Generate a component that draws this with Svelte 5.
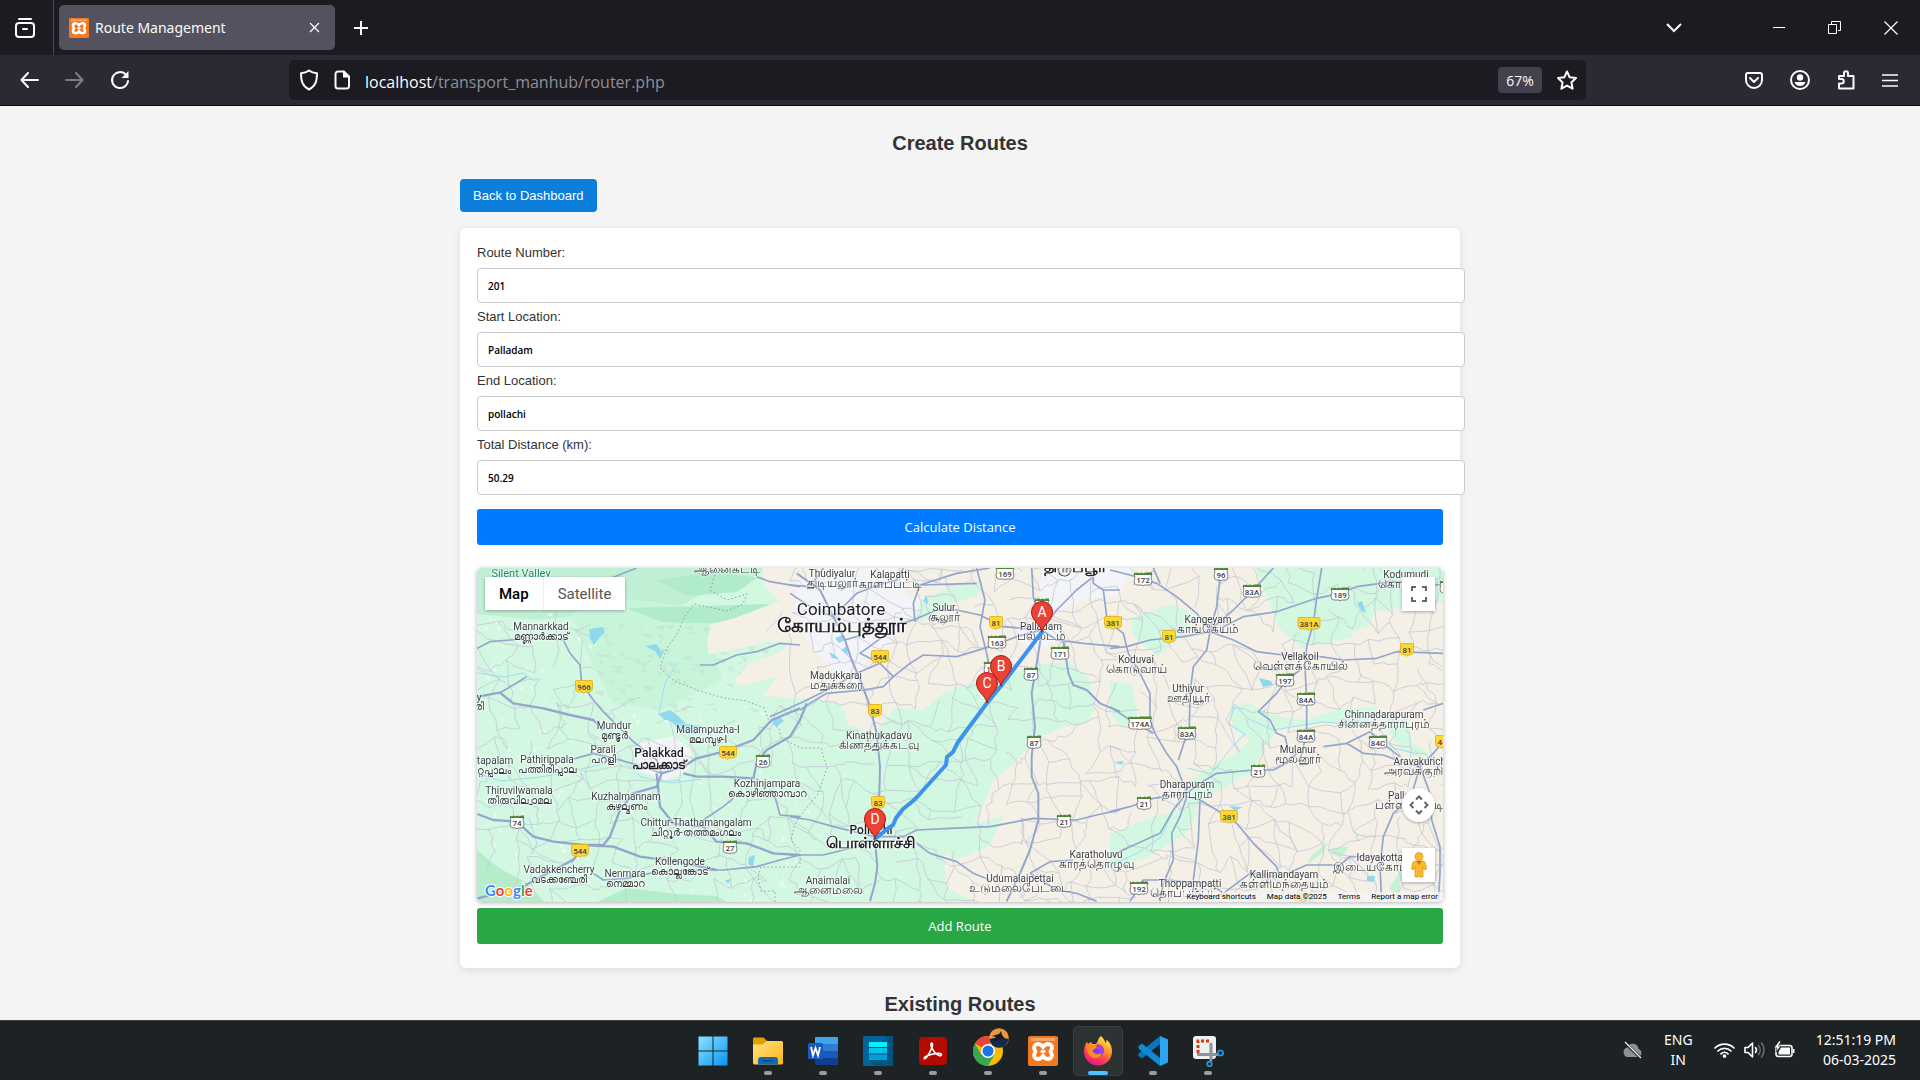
<script>
  let fields = $state([
    { id: 'route-number', label: 'Route Number:', value: '201' },
    { id: 'start-location', label: 'Start Location:', value: 'Palladam' },
    { id: 'end-location', label: 'End Location:', value: 'pollachi' },
    { id: 'total-distance', label: 'Total Distance (km):', value: '50.29' }
  ]);

  // Towns: x centre, baseline, name, local name
  const keralaTowns = [
    [64, 62, 'Mannarkkad', 'മണ്ണാർക്കാട്'],
    [137, 161, 'Mundur', 'മുണ്ടൂർ'],
    [126, 185, 'Parali', 'പറളി'],
    [231, 165, 'Malampuzha-I', 'മലമ്പുഴ-I'],
    [13, 196, 'Ottapalam', 'ഒറ്റപ്പാലം'],
    [70, 195, 'Pathirippala', 'പത്തിരിപ്പാല'],
    [42, 226, 'Thiruvilwamala', 'തിരുവില്വാമല'],
    [149, 232, 'Kuzhalmannam', 'കുഴല്മണം'],
    [219, 258, 'Chittur-Thathamangalam', 'ചിറ്റൂർ-തത്തമംഗലം'],
    [290, 219, 'Kozhinjampara', 'കൊഴിഞ്ഞാമ്പാറ'],
    [203, 297, 'Kollengode', 'കൊല്ലങ്കോട്'],
    [82, 305, 'Vadakkencherry', 'വടക്കഞ്ചേരി'],
    [148, 309, 'Nenmara', 'നെമ്മാറ']
  ];
  const tamilTowns = [
    [355, 9, 'Thudiyalur', 'துடியலூர்'],
    [413, 10, 'Kalapatti', 'காளப்பட்டி'],
    [467, 43, 'Sulur', 'சூலூர்'],
    [359, 111, 'Madukkarai', 'மதுக்கரை'],
    [402, 171, 'Kinathukadavu', 'கிணத்துக்கடவு'],
    [564, 62, 'Palladam', 'பல்லடம்'],
    [351, 316, 'Anaimalai', 'ஆனைமலை'],
    [543, 314, 'Udumalaipettai', 'உடுமலைபேட்டை'],
    [619, 290, 'Karatholuvu', 'காரத்தொழுவு'],
    [659, 95, 'Koduvai', 'கொடுவாய்'],
    [731, 55, 'Kangeyam', 'காங்கேயம்'],
    [711, 124, 'Uthiyur', 'ஊதியூர்'],
    [823, 92, 'Vellakoil', 'வெள்ளக்கோயில்'],
    [929, 10, 'Kodumudi', 'கொடுமுடி'],
    [907, 150, 'Chinnadarapuram', 'சின்னத்தாராபுரம்'],
    [821, 185, 'Mulanur', 'மூலனூர்'],
    [944, 197, 'Aravakurichi', 'அரவக்குறிச்சி'],
    [710, 220, 'Dharapuram', 'தாராபுரம்'],
    [932, 231, 'Pallapatti', 'பள்ளப்பட்டி'],
    [904, 293, 'Idayakottai', 'இடையகோட்டை'],
    [807, 310, 'Kallimandayam', 'கள்ளிமந்தையம்'],
    [713, 319, 'Thoppampatti', 'தொப்பம்பட்டி']
  ];

  const nationalRoads = [
    [107, 119, '966'], [251, 185, '544'], [103, 283, '544'], [403, 89, '544'], [398, 143, '83'],
    [401, 235, '83'], [519, 55, '81'], [636, 55, '381'], [692, 69, '81'], [832, 56, '381A'],
    [930, 82, '81'], [752, 249, '381'], [965, 174, '44'], [828, 332, '381']
  ];
  const stateRoads = [
    [286, 193, '26'], [40, 254, '74'], [253, 279, '27'], [528, 5, '169'], [520, 74, '163'],
    [583, 85, '171'], [554, 106, '87'], [557, 174, '87'], [516, 100, '163'], [587, 253, '21'],
    [565, 37, '19'], [666, 11, '172'], [744, 6, '96'], [775, 23, '83A'], [863, 26, '189'],
    [808, 112, '197'], [829, 131, '84A'], [829, 168, '84A'], [901, 174, '84C'], [663, 155, '174A'],
    [710, 165, '83A'], [781, 203, '21'], [667, 235, '21'], [662, 320, '192'], [970, 19, '37']
  ];
  const stops = [[565, 64, 'A'], [524, 118, 'B'], [510, 135, 'C'], [398, 271, 'D']];

  // Deterministic mesh of village roads and field patches
  let seed = 11;
  const rand = () => ((seed = (seed * 16807) % 2147483647) / 2147483647);
  const hilly = (x, y) =>
    (x > 118 && x < 300 && y < 142) || (x > 90 && x < 250 && y < 60) || (x < 80 && y < 45) ||
    (x < 250 && y > 322) || (x < 30 && y > 290);
  const cell = 20;
  const nodes = [];
  for (let r = 0; r < 19; r++) {
    nodes.push([]);
    for (let c = 0; c < 51; c++) {
      nodes[r].push([c * cell - 12 + rand() * 18, r * cell - 12 + rand() * 18]);
    }
  }
  const f = (n) => n.toFixed(1);
  const link = (a, b) => {
    let d = `M${f(a[0])} ${f(a[1])}`;
    for (const t of [0.33, 0.66]) {
      d += `L${f(a[0] + (b[0] - a[0]) * t + rand() * 5 - 2.5)} ${f(a[1] + (b[1] - a[1]) * t + rand() * 5 - 2.5)}`;
    }
    return `${d}L${f(b[0])} ${f(b[1])}`;
  };
  let lanes = '';
  for (let r = 0; r < 18; r++) {
    for (let c = 0; c < 50; c++) {
      const a = nodes[r][c];
      if (hilly(a[0], a[1])) continue;
      if (rand() < 0.68) lanes += link(a, nodes[r][c + 1]);
      if (rand() < 0.68) lanes += link(a, nodes[r + 1][c]);
      if (rand() < 0.18) lanes += link(a, nodes[r + 1][c + 1]);
    }
  }
  let flecks = '';
  for (let i = 0; i < 460; i++) {
    const x = rand() * 330;
    const y = rand() * 334;
    if (hilly(x, y)) continue;
    flecks += `M${f(x)} ${f(y)}l${f(rand() * 5)} ${f(rand() * 4 - 2)}l${f(-rand() * 3)} ${f(rand() * 5)}z`;
  }
  let ridges = '';
  for (let i = 0; i < 90; i++) {
    const x = 115 + rand() * 170;
    const y = 55 + rand() * 90;
    ridges += `M${f(x)} ${f(y)}l${f(4 + rand() * 9)} ${f(rand() * 5 - 3)}l${f(-rand() * 4)} ${f(2 + rand() * 4)}z`;
  }

  const shieldWidth = (t) => (t.length < 3 ? 13 : t.length < 4 ? 17 : 22);
</script>

{#snippet xampp()}
  <rect width="30" height="30" rx="2" fill="#f47820" />
  <path d="M3 2h24v3H3z" fill="#f9a668" />
  <path d="M15 11C13.500 9 12 8 10 8C7.500 8 6 9.800 6 11.700S7.500 14.500 7.500 15.500S6 17.500 6 19.300S7.500 23 10 23C12 23 13.500 22 15 20C16.500 22 18 23 20 23C22.500 23 24 21.200 24 19.300S22.500 16.500 22.500 15.500S24 13.500 24 11.700S22.500 8 20 8C18 8 16.500 9 15 11z" fill="none" stroke="#fff" stroke-width="3.800" />
  <path d="M12.500 15.500h5" stroke="#fff" stroke-width="2.500" />
{/snippet}

<div class="screen">
  <header class="browser">
    <div class="tabs">
      <button class="tool recent" aria-label="Recent browsing">
        <svg width="20" height="22" viewBox="0 0 20 22" fill="none" stroke="#fbfbfe" stroke-width="2" stroke-linecap="round"><path d="M4 2h12" /><rect x="1" y="6" width="18" height="14" rx="3" /><path d="M8 12h4" /></svg>
      </button>
      <div class="tab">
        <svg width="20" height="20" viewBox="0 0 30 30">{@render xampp()}</svg>
        <span>Route Management</span>
        <button class="tool" aria-label="Close tab"><svg width="11" height="11" viewBox="0 0 11 11" stroke="#fbfbfe" stroke-width="1.300"><path d="M1 1l9 9M10 1l-9 9" /></svg></button>
      </div>
      <button class="tool plus" aria-label="New tab"><svg width="16" height="16" viewBox="0 0 16 16" stroke="#fbfbfe" stroke-width="2"><path d="M8 1v14M1 8h14" /></svg></button>
      <div class="window">
        <button class="tool" aria-label="List all tabs"><svg width="16" height="10" viewBox="0 0 16 10" fill="none" stroke="#fbfbfe" stroke-width="2"><path d="M1 1l7 7 7-7" /></svg></button>
        <button class="tool wide" aria-label="Minimize"><svg width="12" height="12" viewBox="0 0 12 12" stroke="#fff"><path d="M0 5.500h12" /></svg></button>
        <button class="tool" aria-label="Restore"><svg width="13" height="13" viewBox="0 0 13 13" fill="none" stroke="#fff"><path d="M3.500 3V.5h9v9H10M.5 3.500h8v9h-8z" /></svg></button>
        <button class="tool" aria-label="Close window"><svg width="14" height="14" viewBox="0 0 14 14" stroke="#fff" stroke-width="1.200"><path d="M.5.5l13 13M13.500.5l-13 13" /></svg></button>
      </div>
    </div>
    <div class="nav">
      <div class="history">
        <button class="tool" aria-label="Back"><svg width="19" height="16" viewBox="0 0 19 16" fill="none" stroke="#fbfbfe" stroke-width="2" stroke-linecap="round" stroke-linejoin="round"><path d="M18 8H1.500M8 1L1.500 8 8 15" /></svg></button>
        <button class="tool" aria-label="Forward"><svg width="19" height="16" viewBox="0 0 19 16" fill="none" stroke="#7d7c84" stroke-width="2" stroke-linecap="round" stroke-linejoin="round"><path d="M1 8h16.500M11 1l6.500 7L11 15" /></svg></button>
        <button class="tool" aria-label="Reload"><svg width="20" height="20" viewBox="0 0 20 20"><path d="M15.500 4.200A8 8 0 1 0 18 11" fill="none" stroke="#fbfbfe" stroke-width="2" stroke-linecap="round" /><path d="M18.500 1v7h-7z" fill="#fbfbfe" /></svg></button>
      </div>
      <div class="address">
        <svg width="20" height="22" viewBox="0 0 20 22" fill="none" stroke="#fbfbfe" stroke-width="2" stroke-linejoin="round"><path d="M10 1.500c2.500 1.900 5 2.500 8 2.800 0 8-1.500 13-8 16.200C3.500 17.300 2 12.300 2 4.300c3-.3 5.500-.9 8-2.800z" /></svg>
        <svg width="18" height="20" viewBox="0 0 18 20"><path d="M5 1.500h6l5 5V16a2.500 2.500 0 0 1-2.500 2.500H5A2.500 2.500 0 0 1 2.500 16V4A2.500 2.500 0 0 1 5 1.500z" fill="none" stroke="#fbfbfe" stroke-width="2" /><path d="M10 1v6.500h6.500z" fill="#fbfbfe" /></svg>
        <p class="url"><b>localhost</b>/transport_manhub/router.php</p>
        <button class="zoom">67%</button>
        <button class="tool" aria-label="Bookmark"><svg width="22" height="21" viewBox="0 0 22 21" fill="none" stroke="#fbfbfe" stroke-width="2" stroke-linejoin="round"><path d="M11 1.500l2.700 5.800 6.300.8-4.600 4.300 1.200 6.300L11 15.600l-5.600 3.100 1.200-6.300L2 8.100l6.300-.8z" /></svg></button>
      </div>
      <div class="extras">
        <button class="tool" aria-label="Save to Pocket"><svg width="18" height="17" viewBox="0 0 18 17" fill="none" stroke="#fbfbfe" stroke-width="2" stroke-linecap="round" stroke-linejoin="round"><path d="M3 1h12a2 2 0 0 1 2 2v5A8 8 0 0 1 1 8V3a2 2 0 0 1 2-2zM5 6l4 4 4-4" /></svg></button>
        <button class="tool" aria-label="Account"><svg width="20" height="20" viewBox="0 0 20 20"><circle cx="10" cy="10" r="9" fill="none" stroke="#fbfbfe" stroke-width="2" /><circle cx="10" cy="7.500" r="3.200" fill="#fbfbfe" /><path d="M4.500 12h11c-1 3-3 4-5.500 4s-4.500-1-5.500-4z" fill="#fbfbfe" /></svg></button>
        <button class="tool" aria-label="Extensions"><svg width="18" height="20" viewBox="0 0 18 20" fill="none" stroke="#fbfbfe" stroke-width="2" stroke-linejoin="round"><path d="M2 18.500v-5h2.500a2 2 0 0 0 0-4.500H2V6h5V3.300a2 2 0 0 1 4 0V6h5.500v12.500z" /></svg></button>
        <button class="tool" aria-label="Menu"><svg width="16" height="13" viewBox="0 0 16 13" stroke="#fbfbfe" stroke-width="1.500"><path d="M0 1h16M0 6.500h16M0 12h16" /></svg></button>
      </div>
    </div>
  </header>

  <main>
    <h2>Create Routes</h2>
    <div class="container">
      <a class="back" href="#dashboard">Back to Dashboard</a>
      <form class="card" onsubmit={(e) => e.preventDefault()}>
        {#each fields as field}
          <div class="field">
            <label for={field.id}>{field.label}</label>
            <input id={field.id} type="text" bind:value={field.value} />
          </div>
        {/each}
        <button class="action calculate" type="button">Calculate Distance</button>

        <div class="map">
          <svg class="land" viewBox="0 0 966 334" preserveAspectRatio="xMidYMid slice" role="img" aria-label="Route map from Palladam to Pollachi">
            <rect width="966" height="334" fill="#d3f8e2" />
            <!-- hills -->
            <path d="M0 0h290l-12 8-40 10-38 22-40 2-30 12-30-6-40 4L0 46z" fill="#bff0d4" />
            <path d="M95 45l60-14 60 8 70 8-50 25 10 40-60 30-50-8-30-60z" fill="#c8f5da" />
            <path d="M180 12l60-8 40 6-20 14-50 4zM150 40l80-2 60-2 25 8-60 12-70-2z" fill="#b0ebca" />
            <path d="M0 282l22 18 26 14 20 20H0zM120 334l30-14 50 6 40 2 10 6z" fill="#b5edcb" />
            <path d={ridges} fill="#bfe3cd" opacity=".6" />
            <path d={flecks} fill="#f4f8f7" />
            <!-- plains -->
            <path d="M285 0h403l110 0 3 24 22 18 8 26 20 6 40-16 12-26 63-14V334H500l-30-14-3-30 28-32 12-22 10-24 20-16 20-24 28-12 25-6 8-14-6-30-20-16-30 2-30 10-40 10-24 8-22 18-28-2-20 24-26-6-8-22-24-4-54-4 12-16 4-20 12-24-6-30-20-20z" fill="#f5f0e6" />
            <path d="M230 76l4-20 24-6 42-16 40 4 4 24-36 12-20 0-30 8-26 4zM258 112l14-16 46-18 40-16 14 26-26 18-36 0-30 8-18 4z" fill="#f5f0e6" />
            <path d="M320 14l30-14h70l10 28 24 6-28 20-12 24-24 8-8 30-22-8-26-30-16-30z" fill="#f3f4f7" />
            <path d="M566 0h90l-14 26-36 6-28 14-16-16zM160 176l36-8 18 14-2 20-22 10-26-8-4-14zM540 60l24-6 22 12-18 14-22-4z" fill="#f3f4f8" />
            <path d="M438 52l6-20 22-10 40-10-6 16-30 8-12 14zM654 50l40-14 22 10-6 18-30 24-24-20zM778 0h102l10 30 60-16 16 12v8l-84 12-8 24-50 10-22-20-14-36zM633 114l22 2 6 34-16 10-12-16zM633 266l40-16 34-10 14 4-12 22-40 24-36 12z" fill="#d3f8e2" />
            <path d="M705 234l10-24 40-22 18-16-16-10-4-20 16-8 30 14 30 4 30-10 40-4-10 20-40-4-46 6-16 20-12 24-36 20-24 20zM906 148l26 6 2 20 20 12-12 4-18-8-12-18zM470 282l26-26 30-8-14 30-36 16z" fill="#d3f8e2" />
            <path d="M834 288l16-14-3 10-16 12zM856 280l16-2-8 12-10-4zM912 320l12-18-2 30z" fill="#c3f2d6" />

            <path d={lanes} fill="none" stroke="#c3c8d5" stroke-width=".8" />

            <!-- rivers and lakes -->
            <g fill="none" stroke="#9fdcf0" stroke-width="1">
              <path d="M0 105l28 4 18-4 12 8M0 205l24 8 40-4 50-10 30-8 20 18 30 6 30-4M182 145l6-30 12-20M710 200l24 6 20-26 14-14-16-10 6-20 12 14 26 12 50-8 46 4 10-14 14 8M700 235l-16 34-20 14-28 14M902 160l14 20 24 6M52 250l8 26-6 10" />
            </g>
            <g fill="#8fd8f0">
              <path d="M112 61l14-2 2 5-5 5-6 8-4-6zM181 146l12-4 8 6 8 8 16 2-6 8-14-2-10-10-8-3zM168 78l12-2 4 8 4-3-5 10-5-8zM295 152l8-3 4 4-8 6zM272 289l6-2-2 12-5-3zM248 312l6-1-3 5zM358 70l8-3 1 6-5 2zM352 84l6 3 4 4-7-1zM364 82l6-4 1 9-3-2zM446 33l4-5 1 8zM880 35l5-2 4 12-5-3zM782 110l12 3 2 4-10 2zM752 238l14 1-8 4zM890 308h8l-1 6-7-1zM637 194l10-1-3 4z" />
            </g>

            <g fill="none" stroke="#8a8f99" stroke-width=".9" stroke-dasharray="1.500 2.500">
              <path d="M238 7l-5 15 17 10 20-6-4 10-16 7-33-7-10 14-7 16-10 14-7 20 14 13 26 10 24 7 23 3 17 7 5 13 10 7 2 10 20 10h20l6 20-9 26-15 18-8 12-4 16 9 10v17h-39l-3 10 3 14h14v25" />
            </g>

            <!-- highways, traced in three sheets -->
            <g fill="none" stroke="#94a5cc" stroke-width="5" stroke-linejoin="round">
              <g transform="translate(-7 -8) scale(.33333)">
                <path d="M22 265L60 245L120 240L200 232L280 240L300 280L330 315L335 370L370 420L400 455L430 485L490 545L560 600L575 640M90 398L130 375L170 350M300 600L370 580L450 600L520 620L575 640" />
                <path d="M22 410L90 398L130 430L220 445L300 465L370 480L400 510M575 640L640 620L680 595L760 575L850 540L905 480L990 445M640 640L680 650L760 650L850 655L860 610L890 570L960 530L990 480L1010 430" stroke-width="7" />
                <path d="M575 640L560 680L490 700L450 750L420 830L400 855L340 855L310 900L250 930L150 985L22 1015M22 762L70 780L140 785L190 830L250 845L340 855L430 860L510 890L620 905L740 930M560 640L570 740L610 790L700 800L740 845L830 850L910 880L990 885" stroke-width="7" />
                <path d="M370 940L400 960L470 955L540 940L640 930L760 930L860 920L930 900L990 885M990 770L930 765L915 710L900 690M700 780L760 740L790 715M860 50L900 65L990 80M690 315L730 315L800 285L860 275L930 250L990 255M410 60L460 40L500 24" />
              </g>
              <g transform="translate(313 -8) scale(.33333)">
                <path d="M20 40L90 90L130 170L165 240L185 300L215 370L240 440L260 520L270 620L268 700L262 760L255 840L262 920L255 970L240 1024" stroke-width="6" />
                <path d="M340 24L320 60L250 80L200 100L130 170M0 75L60 80L100 24M0 100L60 140L130 170M375 185L370 130L390 75L560 70M390 75L500 40L600 24M560 24L585 120L570 200L590 280L600 330L610 400M165 240L230 220L370 180L440 150L500 150L570 165L640 200L700 205L755 210" />
                <path d="M300 215L210 280L270 310L310 350L360 310L400 285L500 290L600 260L680 230L755 210M310 350L280 380L220 390L110 400L60 430L30 450M270 310L200 340L130 380L40 425L-60 470M755 210L800 150L860 90L910 50M910 24L910 70L940 90L990 90M940 90L950 170L970 190M725 24L730 110L755 210L800 240L880 250L990 260" />
                <path d="M755 215L742 300L725 400L735 500L725 590L725 650L745 700L745 780L720 870L690 940L650 1024M820 240L835 340L850 375L890 390L930 430L990 455" stroke-width="6" />
                <path d="M0 770L60 780L130 800L255 830L340 830L380 810L480 805L600 800L730 775L860 780L920 765L990 750M0 885L100 885L160 870L240 850M380 850L420 880L500 905L550 940L600 960M720 940L780 905L850 900M720 940L800 990L860 1000L920 1024" />
              </g>
              <g transform="translate(633 -8) scale(.33333)">
                <path d="M0 30L60 45L140 70L200 110L260 160L300 210M130 24L150 70M340 24L330 60L320 140L300 210L370 150L430 90L490 24M340 200L400 170L500 155L620 115L690 100L740 80L850 65L990 75" />
                <path d="M635 24L620 115L610 190L590 260L585 320L590 420L590 520L570 600M0 265L50 260L120 240L220 230L300 215L370 240L440 275L520 285L630 290L700 300L800 295L860 275L1000 280M300 215L290 270L250 320L240 400L238 500L205 600" />
                <path d="M0 190L40 220L55 280L95 350L120 400L120 480L135 520L170 580L200 620L230 700M0 440L60 480L130 520M570 330L530 360L500 400L445 455L480 480L500 520L525 530L535 570M230 700L270 670L320 640L430 630L490 630L530 610L560 580" />
                <path d="M640 560L710 550L780 515L830 560L870 590M710 550L760 580L820 585L860 600L930 620L970 580L1000 545M0 755L60 740L130 715L230 700L190 750L150 820L60 860L0 890M230 710L210 770L185 820L190 900L160 970L150 1024M270 720L265 840L250 960L250 1024M230 710L270 720L320 750L380 790L430 850L500 920L510 950" />
                <path d="M510 950L590 915L690 915L720 890L850 890M930 620L960 700L965 780L990 860L990 940L985 1024M930 620L900 720L850 760L820 830L810 920L815 1024M940 450L1000 430M60 1024L100 960L160 960L300 970L340 1000L420 940L510 950" />
              </g>
            </g>

            <g class="label">
              {#each keralaTowns as [x, y, name, local]}
                <text {x} {y}>{name}</text>
                <text {x} y={y + 10}>{local}</text>
              {/each}
              {#each tamilTowns as [x, y, name, local]}
                <text {x} {y}>{name}</text>
                <text class="tamil" {x} y={y + 10}>{local}</text>
              {/each}
              <text class="tamil" x="250" y="5">ஆனைகட்டி</text>
              <text x="2" y="133">y</text>
              <text x="2" y="142">രി</text>
              <text class="park" x="44" y="9">Silent Valley</text>
              <text class="town" x="182" y="189">Palakkad</text>
              <text class="town bold" x="182" y="201">പാലക്കാട്</text>
              <text class="town" x="394" y="266">Pollachi</text>
              <text class="hub bold" x="394" y="280">பொள்ளாச்சி</text>
              <text class="city" x="364" y="47">Coimbatore</text>
              <text class="metro bold" x="364" y="64">கோயம்புத்தூர்</text>
              <text class="hub bold" x="598" y="4">திருப்பூர்</text>
            </g>

            {#each nationalRoads as [x, y, n]}
              {@const w = shieldWidth(n)}
              <g transform="translate({x} {y})">
                <path d="M{-w / 2 + 1} -6.500h{w - 2}q1 0 1 1v7q0 3-3 3.500h{-(w / 2 - 4)}l-1.500 1.500-1.500-1.500H{-w / 2 + 3}q-3-.5-3-3.500v-7q0-1 1-1z" fill="#fdd835" stroke="#dfab12" stroke-width=".8" />
                <text class="shield" y="3">{n}</text>
              </g>
            {/each}
            {#each stateRoads as [x, y, n]}
              {@const w = shieldWidth(n) + 1}
              <g transform="translate({x} {y})">
                <path d="M{-w / 2} -5h{w}l-1 3 1 4q0 4-3 4h{-(w / 2 - 4)}l-1 1-1-1H{-w / 2 + 3}q-3 0-3-4l1-4z" fill="#fff" stroke="#5f6670" stroke-width=".8" />
                <path d="M{-w / 2} -6.500l1.500 1 2-1 2 1 2-1 2 1 1.500-1H{w / 2}v2.500H{-w / 2}z" fill="#528637" />
                <text class="shield" y="4">{n}</text>
              </g>
            {/each}

            <!-- driving route -->
            <path d="M565 64l-41 54-14 17-29 39-5 10-6 5-1 8-20 22-8 9-5 5-10 8-7 9-3 7-7 5-11 9" fill="none" stroke="#3c93ee" stroke-width="4" stroke-linejoin="round" stroke-linecap="round" />
            {#each stops as [x, y, letter]}
              <g transform="translate({x} {y})">
                <path d="M0 0c-1.500-8-10.500-11-10.500-20a10.500 10.500 0 0 1 21 0C10.500-11 1.500-8 0 0z" fill="#ea4335" stroke="#b31412" />
                <text class="pin" y="-15">{letter}</text>
              </g>
            {/each}
          </svg>

          <div class="types">
            <button class="chosen" type="button">Map</button>
            <button type="button">Satellite</button>
          </div>
          <div class="controls">
            <button type="button" aria-label="Toggle fullscreen"><svg width="16" height="16" viewBox="0 0 16 16" fill="none" stroke="#666" stroke-width="2"><path d="M1 5V1h4M11 1h4v4M15 11v4h-4M5 15H1v-4" /></svg></button>
            <button class="round" type="button" aria-label="Map camera controls"><svg width="20" height="20" viewBox="0 0 20 20" fill="none" stroke="#666" stroke-width="2"><path d="M7 4.500l3-3 3 3M7 15.500l3 3 3-3M4.500 7l-3 3 3 3M15.500 7l3 3-3 3" /></svg></button>
            <button type="button" aria-label="Street View Pegman"><svg width="16" height="26" viewBox="0 0 16 26"><circle cx="8" cy="4.500" r="4" fill="#fbbc2b" stroke="#d98c1b" stroke-width=".7" /><path d="M4 9h8q2 0 2.500 2.500L15.500 17l-2 .8-1.500-3V25H8.700v-6H7.300v6H4V14.800l-1.500 3-2-.8 1-5.500Q2 9 4 9z" fill="#fbbc2b" stroke="#d98c1b" stroke-width=".7" /><path d="M5 9h6l-3 4z" fill="#e0681b" /></svg></button>
          </div>
          <p class="google"><i>G</i><i>o</i><i>o</i><i>g</i><i>l</i><i>e</i></p>
          <div class="credits">
            <button type="button">Keyboard shortcuts</button><span>Map data ©2025</span><a href="#terms">Terms</a><a href="#report">Report a map error</a>
          </div>
        </div>

        <button class="action add" type="submit">Add Route</button>
      </form>
    </div>
    <h2>Existing Routes</h2>
  </main>

  <footer class="taskbar">
    <nav class="apps" aria-label="Taskbar">
      <button aria-label="Start"><svg width="30" height="30" viewBox="0 0 30 30"><defs><linearGradient id="win" x2="1" y2="1"><stop stop-color="#8ae4ff" /><stop offset="1" stop-color="#0a93f5" /></linearGradient></defs><path d="M.5.500h14v14H.5zM15.500.500h14v14h-14zM.5 15.500h14v14H.5zM15.500 15.500h14v14h-14z" fill="url(#win)" /></svg></button>
      <button class="open" aria-label="File Explorer"><svg width="30" height="30" viewBox="0 0 30 30"><defs><linearGradient id="fold" x2="1" y2="1"><stop stop-color="#ffe083" /><stop offset="1" stop-color="#fcb813" /></linearGradient></defs><path d="M0 3q0-1.500 1.500-1.500h9L14 5v5H0z" fill="#e0a000" /><path d="M0 8.500h9.500L14 5h14.500Q30 5 30 6.500V27q0 1.500-1.500 1.500h-27Q0 28.500 0 27z" fill="url(#fold)" /><path d="M5 28.500V24q0-3 3-3h14q3 0 3 3v4.500z" fill="#0b6cbd" /><path d="M10 25h10" stroke="#053f73" stroke-width="1.500" /></svg></button>
      <button class="open" aria-label="Word"><svg width="30" height="30" viewBox="0 0 30 30"><path d="M8 1h21q1 0 1 1v6H7V2q0-1 1-1z" fill="#41a5ee" /><path d="M7 8h23v7H7z" fill="#2b7cd3" /><path d="M7 15h23v7H7z" fill="#185abd" /><path d="M7 22h23v6q0 1-1 1H8q-1 0-1-1z" fill="#103f91" /><rect y="7" width="15" height="16" rx="1.500" fill="#185abd" /><path d="M3 11l2 8.500L7.500 12l2.500 7.500L12 11" fill="none" stroke="#fff" stroke-width="1.800" /></svg></button>
      <button class="open" aria-label="Notes"><svg width="30" height="30" viewBox="0 0 30 30"><rect width="30" height="30" rx="1.500" fill="#006399" /><path d="M24 0h6v30H12L6 23z" fill="#00557f" /><path d="M6 6h18v5H6z" fill="#00f0ff" /><path d="M6 12h18v5.500H6z" fill="#00c4ee" /><path d="M6 18.500h18V24H6z" fill="#009fd6" /></svg></button>
      <button class="open" aria-label="Acrobat"><svg width="28" height="28" viewBox="0 0 28 28"><rect width="28" height="28" rx="4" fill="#b30b00" /><path d="M6 20c-2 2 0 3 2-.5C11 16 14 9 13.500 7c-.5-1.500-2-1-1.500 1.500C13 13 17 17.500 20 18.500c2.500.8 3.500-1.500 1-2C17 16 9 18 6 20z" fill="none" stroke="#fff" stroke-width="1.600" /></svg></button>
      <button class="open" aria-label="Chrome"><svg class="badged" width="36" height="38" viewBox="0 0 36 38"><circle cx="15" cy="23" r="15" fill="#fbbc04" /><path d="M15 23L2 15.500A15 15 0 0 1 28 15.500H15z" fill="#ea4335" /><path d="M15 23l-6.500 3.700L2 15.500A15 15 0 0 0 15 38l6.500-11.200z" fill="#34a853" /><circle cx="15" cy="23" r="7" fill="#fff" /><circle cx="15" cy="23" r="5.500" fill="#1a73e8" /><circle cx="26" cy="10" r="9.800" fill="#e8993e" /><path d="M16.400 11q9-3 19.200 0A9.700 9.700 0 0 1 26 19.800 9.700 9.700 0 0 1 16.400 11z" fill="#16284a" /><path d="M19 8l7-2 2-3 1 4 4 5-5-2-6 4-2-2 3-3z" fill="#1b1a22" /></svg></button>
      <button class="open" aria-label="XAMPP"><svg width="30" height="30" viewBox="0 0 30 30">{@render xampp()}</svg></button>
      <button class="open active" aria-label="Firefox"><svg width="30" height="30" viewBox="0 0 30 30"><defs><linearGradient id="fox" x1=".8" y1="0" x2=".3" y2="1"><stop stop-color="#fff04a" /><stop offset=".4" stop-color="#ff9a2b" /><stop offset=".7" stop-color="#ff4050" /><stop offset="1" stop-color="#e31587" /></linearGradient></defs><path d="M18 0c3 3 4 5 4.500 7 1-1 1-2.500.8-3.500C28 7 29 12 29 15.500A14 14 0 0 1 1 15.500C1 11 2.500 8 4 5.500c.3 1 .6 2 1 2.500L8 6l1.500 2H13c2-2 1.500-5 5-8z" fill="url(#fox)" /><circle cx="15" cy="15" r="6" fill="#7a3ff0" /><path d="M4.500 9c3-2 6 1 10 1-1 3-4 2.500-5 5 2 3.500 6 4 9.500 2-1 5-8 7-12 3-3-3-4-7-2.500-11z" fill="#ff8a2b" /><path d="M14 8c4 0 7 3 7.500 7l-3 2c-1-3-3-4-5-5z" fill="#b041d8" /></svg></button>
      <button class="open" aria-label="Visual Studio Code"><svg width="30" height="30" viewBox="0 0 30 30"><path d="M22 0v8L4 22.500.5 20v-2.500z" fill="#0877c0" /><path d="M22 30v-8L4 7.500.5 10v2.500z" fill="#1288d6" /><path d="M22 0l8 3.500v23L22 30z" fill="#2aa5f2" /></svg></button>
      <button class="open" aria-label="Snipping Tool"><svg width="32" height="32" viewBox="0 0 32 32"><rect x="1" y="1" width="23" height="23" rx="3" fill="#eef0f2" /><path d="M6 18V6h13" fill="none" stroke="#d83b01" stroke-width="3" stroke-dasharray="3 2" /><path d="M19 8v18M5 19.500h22" stroke="#8b939b" stroke-width="3" /><circle cx="28.500" cy="18" r="2.700" fill="none" stroke="#2196dc" stroke-width="1.800" /><circle cx="17.500" cy="29" r="2.300" fill="none" stroke="#2196dc" stroke-width="1.800" /></svg></button>
    </nav>
    <div class="tray">
      <svg width="21" height="18" viewBox="0 0 21 18"><path d="M5 16a5 5 0 0 1 0-9.500A6 6 0 0 1 16.500 8a4.200 4.200 0 0 1 0 8z" fill="#8e9091" /><path d="M2 1l17 16" stroke="#1e2425" stroke-width="3" /><path d="M3 1l16 16" stroke="#eee" stroke-width="1.300" /></svg>
      <p class="lang">ENG<br />IN</p>
      <div class="status">
        <svg width="21" height="16" viewBox="0 0 21 16" fill="none" stroke="#fff" stroke-width="1.700" stroke-linecap="round"><path d="M1 6a13.500 13.500 0 0 1 19 0M4 9a9.300 9.300 0 0 1 13 0M7 11.800a5 5 0 0 1 7 0" /><circle cx="10.500" cy="14" r="1" fill="#fff" /></svg>
        <svg width="21" height="18" viewBox="0 0 21 18" fill="none" stroke="#fff" stroke-width="1.600" stroke-linecap="round" stroke-linejoin="round"><path d="M1 6.500h3L8.500 2v14L4 11.500H1zM11.500 6.500a4 4 0 0 1 0 5" /><path d="M14.500 4.500a7 7 0 0 1 0 9M17.500 2a11 11 0 0 1 0 14" stroke="#696d6e" /></svg>
        <svg width="21" height="18" viewBox="0 0 21 18"><rect x="2" y="4.500" width="16" height="11" rx="2.500" fill="none" stroke="#fff" stroke-width="1.600" /><path d="M7 6.500h9v7H4.500V11zM19 8h1.500v4H19z" fill="#fff" /><path d="M5 0L0 7h3l-1 4 5-6H4.500L7 0z" fill="#fff" stroke="#1e2425" stroke-width=".6" /></svg>
      </div>
      <p class="clock">12:51:19 PM<br />06-03-2025</p>
    </div>
  </footer>
</div>

<style>
  :global(body) {
    margin: 0;
  }

  .screen {
    display: flex;
    flex-direction: column;
    min-height: 100vh;
    background: #f4f4f4;
    font-family: 'Liberation Sans', Arial, sans-serif;
    color: #333;
  }

  p {
    margin: 0;
  }

  button {
    padding: 0;
    border: 0;
    background: none;
    font: inherit;
    color: inherit;
  }

  svg {
    display: block;
    flex: none;
  }

  .browser {
    background: #2b2a33;
    border-bottom: 1px solid #0c0c0d;
    font-family: 'Open Sans', 'Noto Sans', sans-serif;
    color: #fbfbfe;
  }

  .tabs {
    display: flex;
    align-items: center;
    height: 55px;
    background: #1c1b22;
  }

  .tool {
    display: flex;
    align-items: center;
    justify-content: center;
  }

  .recent {
    box-sizing: border-box;
    width: 54px;
    height: 55px;
    padding-right: 4px;
    border-right: 1px solid #4a4953;
  }

  .tab {
    display: flex;
    align-items: center;
    gap: 6px;
    box-sizing: border-box;
    width: 276px;
    height: 45px;
    margin-left: 5px;
    padding: 0 15px 0 10px;
    border-radius: 5px;
    background: #54525e;
    font-family: 'Noto Sans', 'Open Sans', sans-serif;
    font-size: 14px;
  }

  .tab span {
    flex: 1;
  }

  .plus {
    margin-left: 18px;
  }

  .window {
    display: flex;
    align-items: center;
    gap: 43px;
    margin-left: auto;
    padding-right: 22px;
  }

  .wide {
    margin-left: 48px;
  }

  .nav {
    display: grid;
    grid-template-columns: 289px 1fr 334px;
    align-items: center;
    height: 50px;
  }

  .history {
    display: flex;
    align-items: center;
    gap: 26px;
    padding-left: 20px;
  }

  .address {
    display: flex;
    align-items: center;
    gap: 14px;
    height: 40px;
    padding: 0 8px 0 10px;
    border-radius: 5px;
    background: #1c1b22;
  }

  .url {
    flex: 1;
    padding-top: 3px;
    color: #8f8f98;
    font-size: 16px;
  }

  .url b {
    color: #fbfbfe;
    font-weight: 400;
  }

  .zoom {
    width: 44px;
    height: 26px;
    border-radius: 4px;
    background: #42414d;
    font-size: 14px;
  }

  .extras {
    display: flex;
    align-items: center;
    justify-content: flex-end;
    gap: 27px;
    padding-right: 22px;
  }

  main {
    flex: 1;
    padding: 25px 16px 4px;
  }

  h2 {
    margin: 0;
    font-size: 20px;
    line-height: 24px;
    text-align: center;
  }

  .container {
    max-width: 1000px;
    margin: 24px auto;
  }

  .back {
    display: inline-block;
    padding: 0 13px;
    border-radius: 4px;
    background: #0b7ddb;
    color: #fff;
    font-size: 13px;
    line-height: 33px;
    text-decoration: none;
    vertical-align: top;
  }

  .card {
    margin-top: 16px;
    padding: 16px 17px 24px;
    border-radius: 6px;
    background: #fff;
    box-shadow: 0 2px 8px rgb(0 0 0 / 10%);
  }

  .field {
    margin-bottom: 5px;
  }

  .field label {
    display: block;
    margin-bottom: 6px;
    font-size: 13px;
    line-height: 18px;
  }

  .field input {
    display: block;
    box-sizing: border-box;
    width: calc(100% + 22px);
    height: 35px;
    padding: 0 10px;
    border: 1px solid #ccc;
    border-radius: 4px;
    background: #fff;
    color: #000;
    font: 600 10px 'Open Sans', 'Noto Sans', sans-serif;
  }

  .action {
    display: block;
    width: 100%;
    height: 36px;
    border-radius: 3px;
    color: #fff;
    font-family: 'Open Sans', 'Noto Sans', sans-serif;
    font-size: 13px;
  }

  .calculate {
    margin-top: 14px;
    background: #007bff;
  }

  .add {
    background: #28a745;
  }

  .map {
    position: relative;
    height: 334px;
    margin: 23px 0 6px;
    border-radius: 5px;
    overflow: hidden;
    box-shadow: 0 1px 5px rgb(0 0 0 / 30%);
    font-family: Roboto, 'Noto Sans', sans-serif;
  }

  .land {
    width: 100%;
    height: 100%;
  }

  .land text {
    text-anchor: middle;
  }

  .label {
    font-size: 10px;
    fill: #3c4043;
    filter: drop-shadow(0 0 1px #fff) drop-shadow(0 0 1px #fff);
  }

  .label .tamil {
    font-size: 12px;
  }

  .label .park {
    font-size: 11px;
    fill: #1c8a63;
  }

  .label .town {
    font-size: 12px;
    font-weight: 500;
    fill: #202124;
  }

  .label .hub {
    font-size: 16px;
    fill: #202124;
  }

  .label .city {
    font-size: 17px;
    fill: #202124;
  }

  .label .metro {
    font-size: 20px;
    fill: #202124;
  }

  .label .bold {
    font-weight: 700;
  }

  .shield {
    font-size: 8px;
    font-weight: 500;
    fill: #3c4043;
  }

  .pin {
    font-size: 14px;
    fill: #fff;
  }

  .types {
    position: absolute;
    top: 9px;
    left: 8px;
    display: flex;
    height: 33px;
    background: #fff;
    box-shadow: 0 1px 3px rgb(0 0 0 / 30%);
    color: #565656;
    font-size: 15px;
  }

  .types button {
    padding: 0 14px;
  }

  .types .chosen {
    border-right: 1px solid #eee;
    color: #000;
    font-weight: 500;
  }

  .controls {
    position: absolute;
    top: 9px;
    right: 8px;
    bottom: 20px;
    display: flex;
    flex-direction: column;
    gap: 26px;
  }

  .controls button {
    display: flex;
    align-items: center;
    justify-content: center;
    width: 33px;
    height: 34px;
    background: #fff;
    box-shadow: 0 1px 3px rgb(0 0 0 / 30%);
  }

  .controls .round {
    margin-top: auto;
    border-radius: 50%;
  }

  .google {
    position: absolute;
    left: 8px;
    bottom: 2px;
    font-size: 15px;
    line-height: 20px;
    font-family: Lato, sans-serif;
    font-weight: 700;
    -webkit-text-stroke: 2px #fff;
    paint-order: stroke fill;
    color: #4285f4;
  }

  .google i {
    font-style: normal;
  }

  .google i:nth-child(2),
  .google i:nth-child(6) {
    color: #ea4335;
  }

  .google i:nth-child(3) {
    color: #fbbc05;
  }

  .google i:nth-child(5) {
    color: #34a853;
  }

  .credits {
    position: absolute;
    right: 0;
    bottom: 0;
    display: flex;
    gap: 1px;
    color: #000;
    font-size: 8px;
    line-height: 10px;
  }

  .credits > * {
    padding: 0 5px;
    background: rgb(245 245 245 / 75%);
    color: inherit;
    text-decoration: none;
  }

  .taskbar {
    display: grid;
    grid-template-columns: 1fr auto 1fr;
    align-items: center;
    height: 60px;
    box-sizing: border-box;
    border-top: 1px solid #3f4445;
    background: #1d2324;
    color: #fff;
    font-family: 'Open Sans', 'Noto Sans', sans-serif;
  }

  .apps {
    grid-column: 2;
    display: flex;
    gap: 5px;
  }

  .apps button {
    position: relative;
    display: flex;
    align-items: center;
    justify-content: center;
    box-sizing: border-box;
    width: 50px;
    height: 50px;
    border: 1px solid transparent;
    border-radius: 5px;
  }

  .apps .badged {
    margin: 0 0 8px 6px;
  }

  .apps .open::after {
    content: '';
    position: absolute;
    bottom: 0;
    width: 8px;
    height: 4px;
    border-radius: 2px;
    background: #9a9d9d;
  }

  .apps .active {
    border-color: #3a3f40;
    background: #2d3233;
  }

  .apps .active::after {
    width: 20px;
    background: #4cc2ff;
  }

  .tray {
    display: flex;
    align-items: center;
    justify-content: flex-end;
    gap: 21px;
    padding: 0 24px 2px 0;
    font-family: 'Noto Sans', 'Open Sans', sans-serif;
    font-size: 14px;
    line-height: 20px;
  }

  .lang {
    text-align: center;
  }

  .status {
    display: flex;
    align-items: center;
    gap: 9px;
  }

  .clock {
    text-align: right;
  }
</style>
